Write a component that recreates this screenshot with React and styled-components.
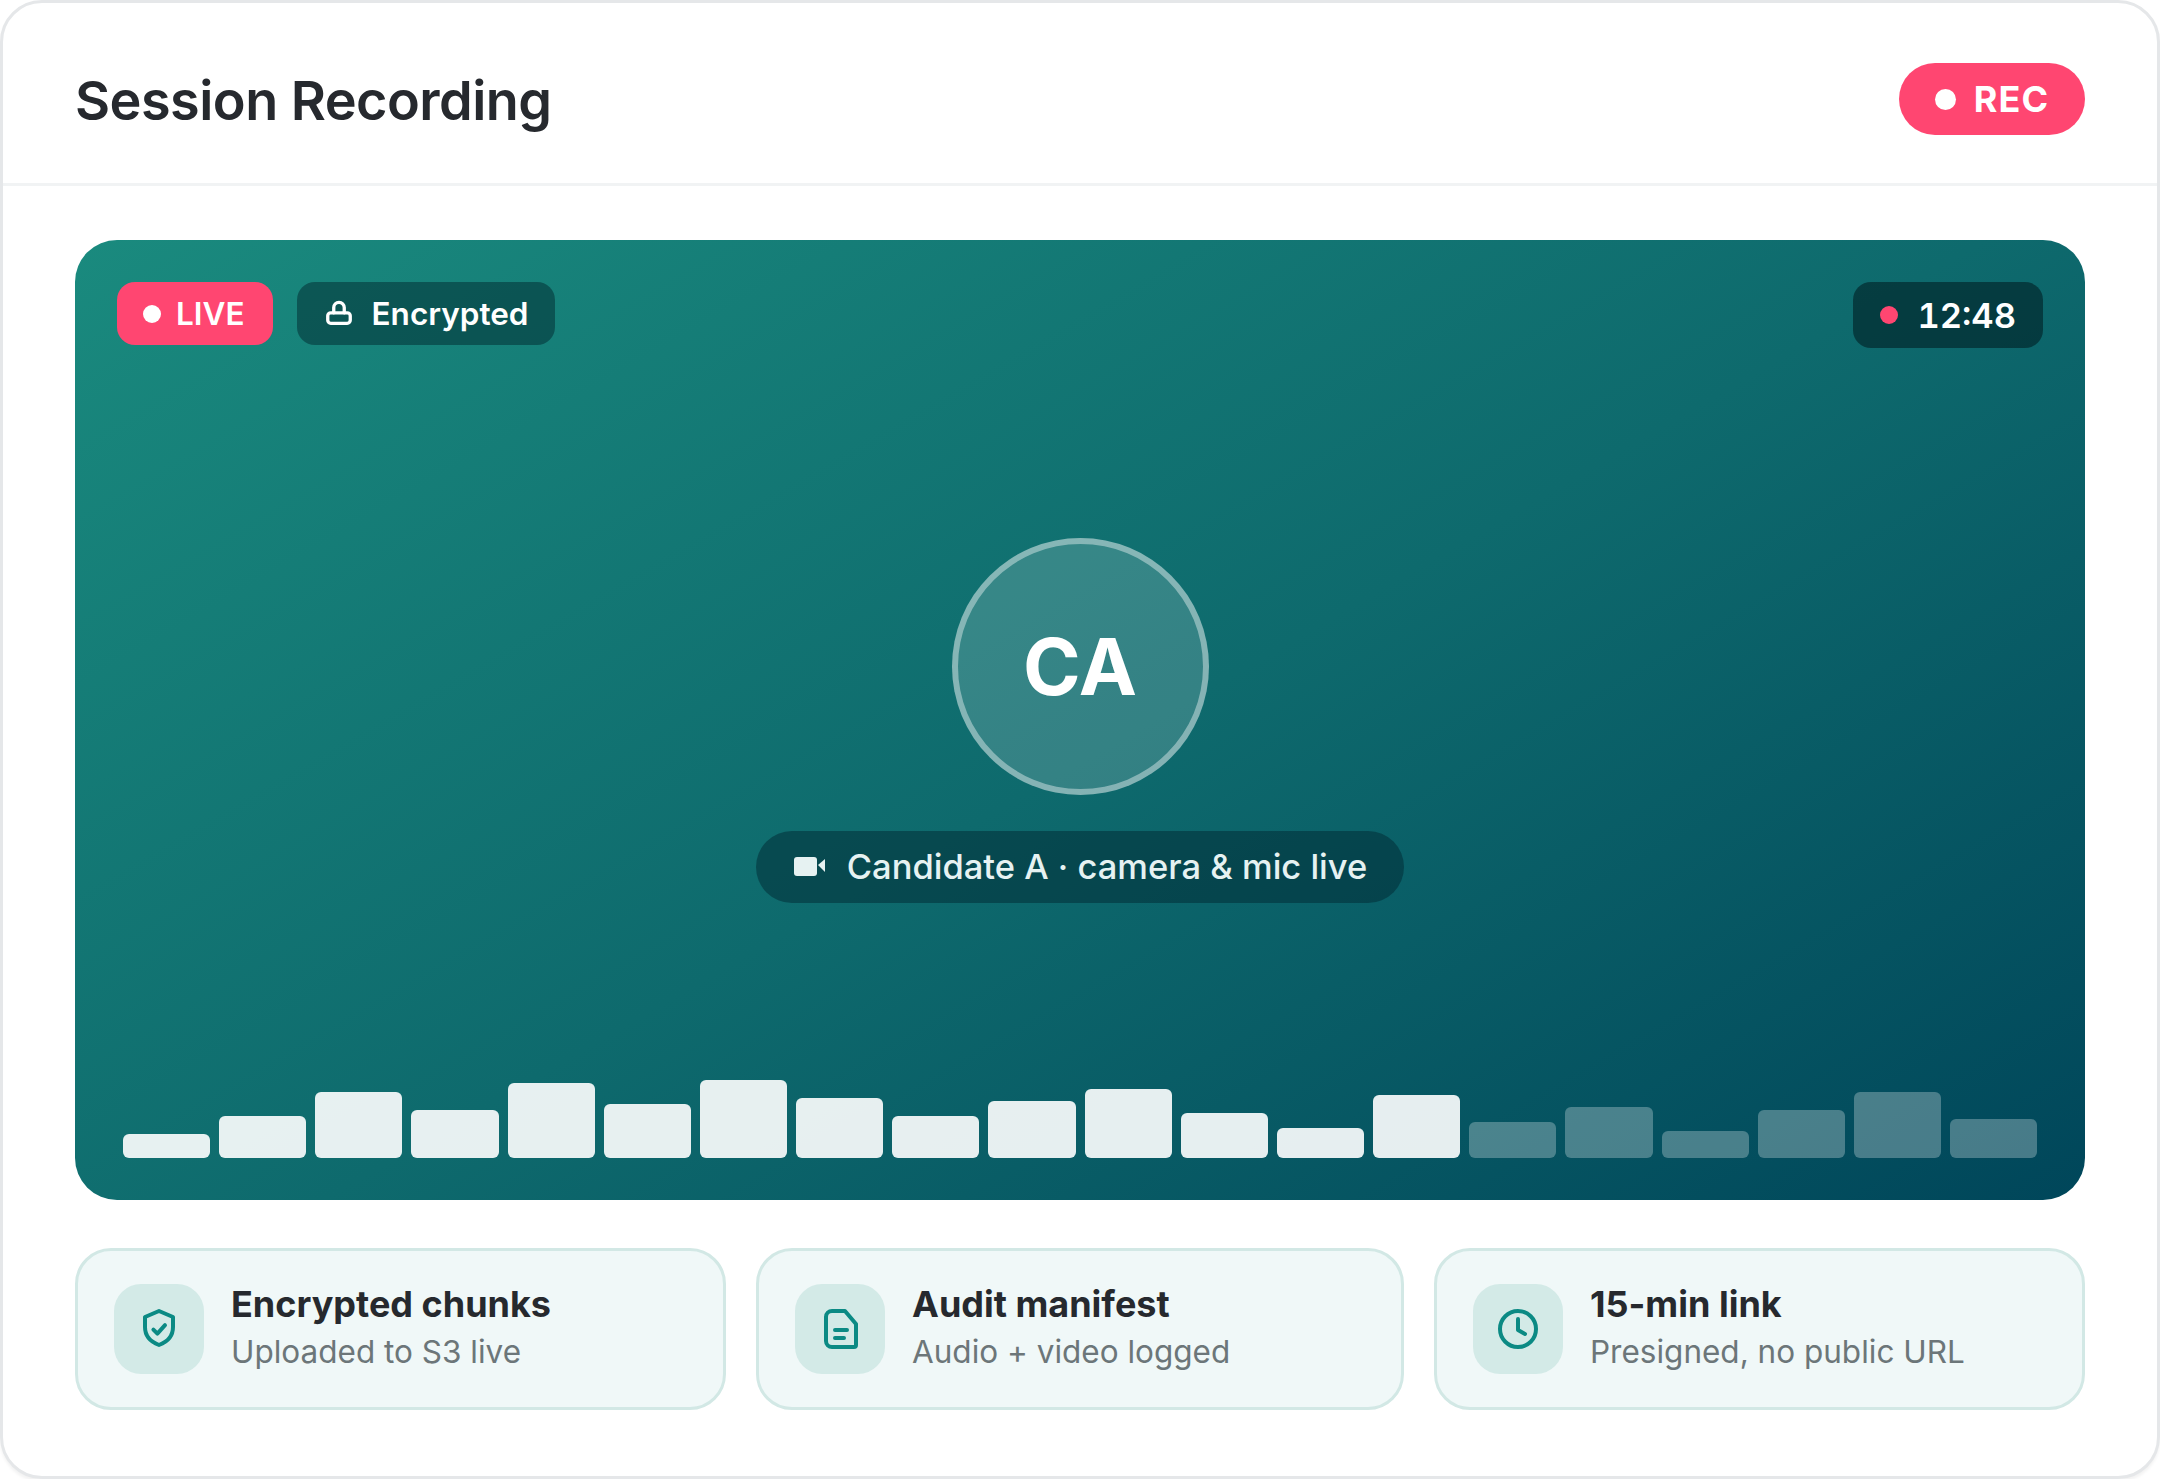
import React from 'react';
import styled, { createGlobalStyle } from 'styled-components';

const GlobalStyle = createGlobalStyle`
  * {
    box-sizing: border-box;
  }
  html, body {
    margin: 0;
    background: #ffffff;
  }
  body {
    font-family: Inter, "Noto Sans", sans-serif;
  }
`;

const Card = styled.div`
  width: 2160px;
  height: 1479px;
  background: #ffffff;
  border: 3px solid #e5e7e9;
  border-radius: 42px;
  box-shadow: 0 3px 3px rgba(0, 0, 0, 0.05);
  overflow: hidden;
`;

const Header = styled.header`
  height: 183px;
  padding: 12px 72px 0;
  display: flex;
  align-items: center;
  justify-content: space-between;
  border-bottom: 3px solid #f1f3f4;
`;

const Title = styled.h1`
  margin: 2px 0 0;
  font-size: 54px;
  font-weight: 600;
  letter-spacing: -0.54px;
  color: #26292e;
`;

const RecPill = styled.div`
  width: 186px;
  height: 72px;
  display: flex;
  align-items: center;
  justify-content: center;
  gap: 18px;
  border-radius: 36px;
  background: #ff4671;
  color: #ffffff;
  font-size: 36px;
  font-weight: 700;
  letter-spacing: 1.1px;
`;

const Dot = styled.span`
  flex: none;
  width: ${(p) => p.size}px;
  height: ${(p) => p.size}px;
  border-radius: 50%;
  background: ${(p) => p.color || '#ffffff'};
`;

const Body = styled.main`
  padding: 54px 72px 0;
  display: flex;
  flex-direction: column;
  gap: 48px;
`;

const Video = styled.section`
  position: relative;
  height: 960px;
  border-radius: 42px;
  background: linear-gradient(150deg, #1a8a7e 0%, #0e6a6d 52%, #00465a 100%);
  display: flex;
  flex-direction: column;
  align-items: center;
  justify-content: center;
  gap: 36px;
`;

const TopBar = styled.div`
  position: absolute;
  top: 42px;
  left: 42px;
  right: 42px;
  display: flex;
  align-items: flex-start;
  justify-content: space-between;
`;

const BadgeGroup = styled.div`
  display: flex;
  gap: 24px;
`;

const Badge = styled.div`
  height: 63px;
  padding: ${(p) => (p.$live ? '0 28px 0 26px' : '0 26px 0 24px')};
  display: flex;
  align-items: center;
  gap: 15px;
  border-radius: 18px;
  background: ${(p) => (p.$live ? '#ff4671' : 'rgba(0, 40, 45, 0.5)')};
  color: #ffffff;
  font-size: 31.5px;
  font-weight: 600;
`;

const Timer = styled.div`
  height: 66px;
  padding: 0 27px;
  display: flex;
  align-items: center;
  gap: 19px;
  border-radius: 18px;
  background: rgba(0, 30, 35, 0.6);
  color: #ffffff;
  font-size: 34.5px;
  font-weight: 600;
  font-variant-numeric: tabular-nums;
`;

const Avatar = styled.div`
  width: 257px;
  height: 257px;
  display: flex;
  align-items: center;
  justify-content: center;
  border-radius: 50%;
  border: 6px solid rgba(255, 255, 255, 0.4);
  background: rgba(255, 255, 255, 0.16);
  color: #ffffff;
  font-size: 78px;
  font-weight: 700;
`;

const Caption = styled.div`
  height: 72px;
  padding: 0 37px 0 38px;
  display: flex;
  align-items: center;
  gap: 21px;
  border-radius: 36px;
  background: rgba(0, 40, 50, 0.5);
  color: #e6f2f2;
  font-size: 34.5px;
  font-weight: 500;
`;

const Meter = styled.div`
  position: absolute;
  left: 48px;
  right: 48px;
  bottom: 42px;
  display: flex;
  align-items: flex-end;
  gap: 9px;
`;

const Bar = styled.div`
  flex: 1;
  border-radius: 6px;
  background: rgba(255, 255, 255, ${(p) => (p.$off ? 0.28 : 0.9)});
`;

const InfoRow = styled.div`
  display: grid;
  grid-template-columns: 651fr 648fr 651fr;
  gap: 30px;
`;

const InfoCard = styled.div`
  height: 162px;
  padding: 0 36px;
  display: flex;
  align-items: center;
  gap: 27px;
  border: 3px solid #d2e8e5;
  border-radius: 36px;
  background: #f0f8f8;
`;

const IconBox = styled.div`
  flex: none;
  width: 90px;
  height: 90px;
  display: flex;
  align-items: center;
  justify-content: center;
  border-radius: 27px;
  background: #d3eae7;
  color: #0b8a84;
`;

const InfoText = styled.div`
  display: flex;
  flex-direction: column;
  gap: 6px;
  padding-bottom: 5px;
`;

const InfoTitle = styled.div`
  font-size: 36px;
  font-weight: 700;
  color: #26292e;
`;

const InfoSub = styled.div`
  font-size: 31.5px;
  font-weight: 400;
  color: #6c7679;
`;

const heights = [24, 42, 66, 48, 75, 54, 78, 60, 42, 57, 69, 45, 30, 63, 36, 51, 27, 48, 66, 39];

const Stroke = ({ children }) => (
  <svg width="48" height="48" viewBox="0 0 24 24" fill="none" stroke="currentColor" strokeWidth="2" strokeLinecap="round" strokeLinejoin="round">
    {children}
  </svg>
);

const infos = [
  {
    title: 'Encrypted chunks',
    sub: 'Uploaded to S3 live',
    icon: (
      <Stroke>
        <path d="M12 3l7 3v5c0 4.500-3 7.500-7 9-4-1.500-7-4.500-7-9V6z" />
        <path d="M9.200 12.300l2 2 3.800-4.200" />
      </Stroke>
    ),
  },
  {
    title: 'Audit manifest',
    sub: 'Audio + video logged',
    icon: (
      <Stroke>
        <path d="M8 3h6.500L20 9.500V20a1 1 0 0 1-1 1H8a3 3 0 0 1-3-3V6a3 3 0 0 1 3-3z" />
        <path d="M9.500 12.500h6M9.500 16.500h4.500" />
      </Stroke>
    ),
  },
  {
    title: '15-min link',
    sub: 'Presigned, no public URL',
    icon: (
      <Stroke>
        <circle cx="12" cy="12" r="9" />
        <path d="M12 7v5.500l3.500 2" />
      </Stroke>
    ),
  },
];

export default function App() {
  return (
    <>
      <GlobalStyle />
      <Card>
        <Header>
          <Title>Session Recording</Title>
          <RecPill>
            <Dot size={21} />
            REC
          </RecPill>
        </Header>
        <Body>
          <Video>
            <TopBar>
              <BadgeGroup>
                <Badge $live>
                  <Dot size={18} />
                  LIVE
                </Badge>
                <Badge>
                  <svg width="36" height="36" viewBox="0 0 24 24" fill="none" stroke="#ffffff" strokeWidth="2.200" strokeLinecap="round" strokeLinejoin="round">
                    <rect x="4.500" y="11.200" width="15" height="7" rx="2" />
                    <path d="M8.500 11.200V7.700a3.500 3.500 0 0 1 7 0v3.500" />
                  </svg>
                  Encrypted
                </Badge>
              </BadgeGroup>
              <Timer>
                <Dot size={18} color="#ff4671" />
                12:48
              </Timer>
            </TopBar>
            <Avatar>CA</Avatar>
            <Caption>
              <svg width="32" height="20" viewBox="0 0 32 20" fill="#e6f2f2">
                <rect x="0" y="0" width="23" height="19" rx="3" />
                <polygon points="24,8 31,2 31,15" />
              </svg>
              Candidate A · camera &amp; mic live
            </Caption>
            <Meter>
              {heights.map((h, i) => (
                <Bar key={i} $off={i >= 14} style={{ height: h }} />
              ))}
            </Meter>
          </Video>
          <InfoRow>
            {infos.map((info) => (
              <InfoCard key={info.title}>
                <IconBox>{info.icon}</IconBox>
                <InfoText>
                  <InfoTitle>{info.title}</InfoTitle>
                  <InfoSub>{info.sub}</InfoSub>
                </InfoText>
              </InfoCard>
            ))}
          </InfoRow>
        </Body>
      </Card>
    </>
  );
}
